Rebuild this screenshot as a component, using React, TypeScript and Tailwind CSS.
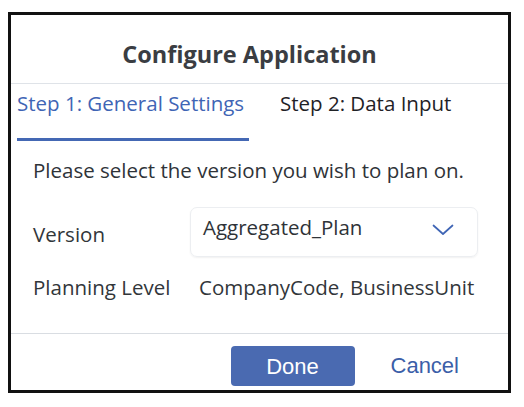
// Wizard dialog: "Configure Application", step 1 of 2
export default function App() {
  const font = { fontFamily: '"Open Sans", "Noto Sans", sans-serif' };
  const arial = { fontFamily: '"Liberation Sans", Arial, sans-serif' };

  return (
    <div className="w-[524px] h-[407px] bg-white pl-[8px] pt-[12px]">
      <div
        className="w-[503px] h-[381px] border-[3px] border-[#111] bg-white flex flex-col text-[#32363a]"
        style={font}
      >
        {/* header */}
        <div className="h-[69px] flex justify-center pt-[23px] pr-[20px] border-b border-[#dfe3e8]">
          <h1 className="text-[23.5px] leading-[32px] font-bold text-[#3a3d42]">Configure Application</h1>
        </div>

        {/* tabs */}
        <div className="flex pl-[6px] h-[58px]">
          <div className="flex flex-col justify-between w-[232px] pt-[5px]">
            <span className="text-[20.5px] leading-[28px] whitespace-nowrap text-[#3f65b5]">Step 1: General Settings</span>
            <div className="h-[3px] bg-[#4468b4] mb-[1px]" />
          </div>
          <div className="pl-[31px] pt-[5px]">
            <span className="text-[20.5px] leading-[28px] whitespace-nowrap text-[#1f2226]">Step 2: Data Input</span>
          </div>
        </div>

        {/* body */}
        <div className="flex-1 pl-[22px] pr-[20px] pt-[14px]">
          <p className="text-[20.5px] leading-[28px] text-[#2f3338]">Please select the version you wish to plan on.</p>
          <div className="flex items-start mt-[23px]">
            <span className="w-[157px] pt-[13px] text-[20.5px] leading-[28px]">Version</span>
            <div className="w-[288px] h-[50px] rounded-[7px] border border-[#eceef1] shadow-[0_1px_2px_rgba(0,0,0,0.06)] flex justify-between pl-[12px] pr-[23px] pt-[5px]">
              <span className="text-[20.5px] leading-[28px] text-[#2f3338]">Aggregated_Plan</span>
              <svg width="22" height="12" viewBox="0 0 22 12" className="mt-[11px]">
                <polyline points="1.5,1.5 11,10 20.5,1.5" fill="none" stroke="#3f65b5" strokeWidth="1.7" strokeLinecap="round" strokeLinejoin="round" />
              </svg>
            </div>
          </div>
          <div className="flex items-center mt-[16px]">
            <span className="w-[166px] text-[20.5px] leading-[28px]">Planning Level</span>
            <span className="text-[20.5px] leading-[28px]">CompanyCode, BusinessUnit</span>
          </div>
        </div>

        {/* footer */}
        <div className="h-[57px] border-t border-[#d9dde2] flex justify-end items-start pt-[12px] pr-[49px]">
          <button className="w-[124px] h-[40px] rounded-[4px] bg-[#4a6ab1] text-white text-[22px]" style={arial}>
            Done
          </button>
          <button className="ml-[36px] h-[38px] text-[22px] text-[#3b5ea8]" style={arial}>
            Cancel
          </button>
        </div>
      </div>
    </div>
  );
}
